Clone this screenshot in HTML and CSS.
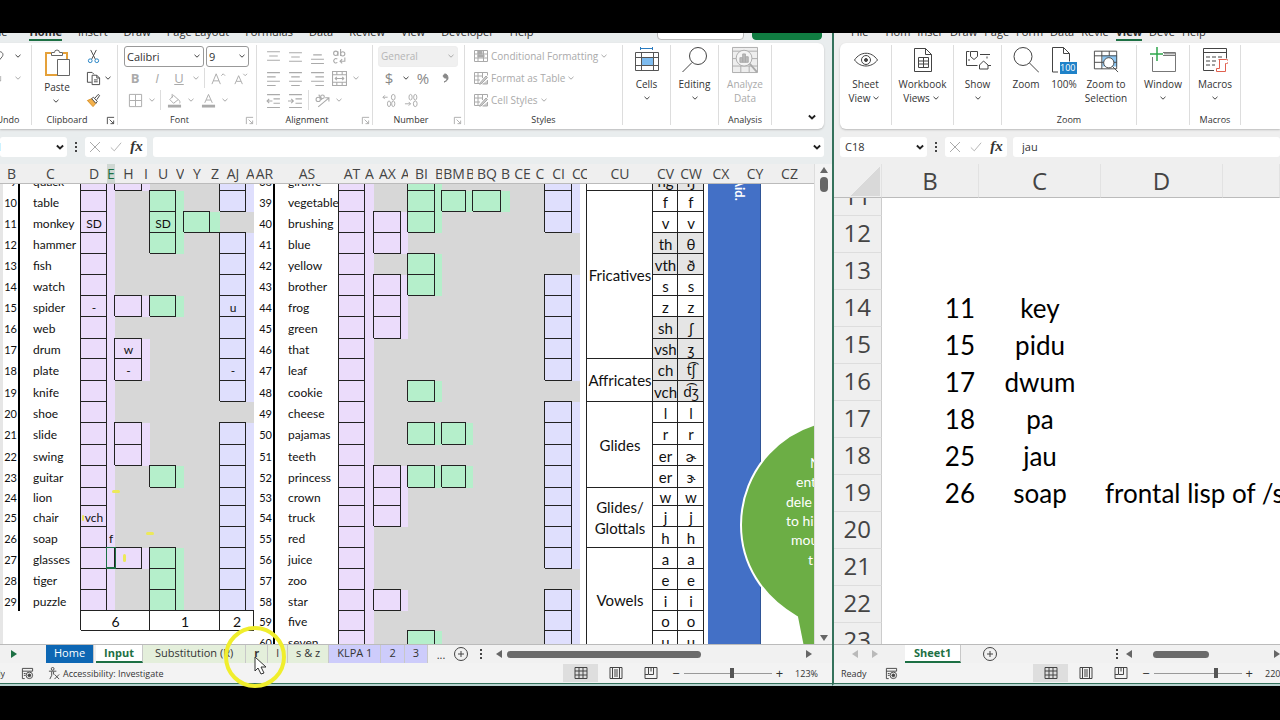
FILE: index.html
```
<!DOCTYPE html>
<html lang="en">
<head>
  <meta charset="UTF-8" />
  <meta name="viewport" content="width=device-width, initial-scale=1.0"/>
  <title>Input - Excel</title>
  <link rel="stylesheet" href="styles.css">
</head>
<body>
  <svg class="defs" aria-hidden="true">
    <symbol id="chev" viewBox="0 0 8 8"><path d="M1.5 2.8 4 5.2 6.5 2.8"/></symbol>
    <symbol id="launch" viewBox="0 0 10 10"><path d="M1.500 9V1.500H9M4 4l4.500 4.500M8.500 5v3.500H5"/></symbol>
    <symbol id="undo" viewBox="0 0 18 18"><path d="M2 5c4-4 11-1 8 4l-5 6"/></symbol>
    <symbol id="redo" viewBox="0 0 18 18"><path d="M1 4l7 8M8 6v6H2M1 16l2-3"/></symbol>
    <symbol id="paste" viewBox="0 0 26 28"><path stroke="#e5a13a" stroke-width="2" d="M7 4H2v22h12M19 4h4v6"/><path fill="#fff" stroke="#666" d="M7.500 6.500v-3h3a2.500 2.500 0 0 1 5 0h3v3zM13.500 10.500h12v16h-12z"/></symbol>
    <symbol id="cut" viewBox="0 0 14 16"><path stroke="#444" d="M4 1l5 10M10 1L5 11"/><g stroke="#1e7fc2"><circle cx="3.500" cy="12.500" r="2"/><circle cx="10.500" cy="12.500" r="2"/></g></symbol>
    <symbol id="copy" viewBox="0 0 16 16"><path stroke="#444" d="M6 12H1.500V1.500h5l2 2"/><path stroke="#444" fill="#fff" d="M6.500 4.500h5l3 3v7h-8zM11.500 4.500v3h3M8.500 9.500h4M8.500 11.500h4"/></symbol>
    <symbol id="brush" viewBox="0 0 16 16"><path fill="#f2b04c" stroke="#d98c1a" d="M1.500 8l5-2 4 5-3 3.500z"/><path fill="#fff" stroke="#444" d="M6 6l2-1.500L12 9l-1.500 2zM9.500 5.500L13 1.500l1.500 1.200-3 4.500"/></symbol>
    <symbol id="borders" viewBox="0 0 16 16"><path d="M1.500 1.500h13v13h-13zM8 2v12M2 8h12"/></symbol>
    <symbol id="fill" viewBox="0 0 16 16"><path d="M7 2.500l5 4.500-5 4-4-4zM5.500 1v4M12 7c2 1 2 3 1.500 4"/><path stroke-width="3" d="M1 14h14"/></symbol>
    <symbol id="fontcol" viewBox="0 0 16 16"><path d="M4 10.500L8 1.500l4 9M5.500 7.500h5"/><path stroke-width="3" d="M1 14h14"/></symbol>
    <symbol id="grow" viewBox="0 0 16 16"><path d="M1 14L5.500 3 10 14M2.500 10.500h6M11 5l2-2 2 2"/></symbol>
    <symbol id="shrink" viewBox="0 0 16 16"><path d="M2 14L6 5l4 9M3.500 11h5M11 3l2 2 2-2"/></symbol>
    <symbol id="al-top" viewBox="0 0 14 14"><path d="M1 2.500h12M3 6.500h8M1 10.500h12"/></symbol>
    <symbol id="al-mid" viewBox="0 0 14 14"><path d="M1 3.500h12M3 7.500h8M1 11.500h12"/></symbol>
    <symbol id="al-bot" viewBox="0 0 14 14"><path d="M3 5.500h8M1 9.500h12M1 13.500h12"/></symbol>
    <symbol id="al-left" viewBox="0 0 14 14"><path d="M1 1.500h12M1 5.500h8M1 9.500h12M1 13.500h8"/></symbol>
    <symbol id="al-cen" viewBox="0 0 14 14"><path d="M1 1.500h12M3 5.500h8M1 9.500h12M3 13.500h8"/></symbol>
    <symbol id="al-right" viewBox="0 0 14 14"><path d="M1 1.500h12M5 5.500h8M1 9.500h12M5 13.500h8"/></symbol>
    <symbol id="wrap" viewBox="0 0 14 14"><circle cx="3.500" cy="4" r="2"/><path d="M5.500 2v4.500M8 0v6.500"/><circle cx="10" cy="4.500" r="2"/><path d="M5 9.500a2 2 0 1 0 0 3M12 8v3.500H7.500M9.500 9.500l-2 2 2 2"/></symbol>
    <symbol id="merge" viewBox="0 0 14 14"><path d="M.5.5h13v13H.5zM.5 3.500h13M.5 10.500h13M4.500.5v3M9.500.5v3M4.500 10.500v3M9.500 10.500v3M3 7h8M4.500 5.500L3 7l1.500 1.500M9.500 5.500L11 7 9.500 8.500"/></symbol>
    <symbol id="outdent" viewBox="0 0 14 14"><path d="M1 1.500h12M7 5.500h6M7 9.500h6M1 13.500h12M1 7.500h5M3 5.500l-2 2 2 2"/></symbol>
    <symbol id="indent" viewBox="0 0 14 14"><path d="M1 1.500h12M7 5.500h6M7 9.500h6M1 13.500h12M0 7.500h5M3 5.500l2 2-2 2"/></symbol>
    <symbol id="orient" viewBox="0 0 14 14"><circle cx="3" cy="6" r="2"/><path d="M3.500 1.500l3 5"/><circle cx="7" cy="3.500" r="1.700"/><path d="M3 13l9.500-8M9.500 4.500h3.500v3.500"/></symbol>
    <symbol id="dec-up" viewBox="0 0 16 14"><path d="M6 3.500H1M3 1.500l-2 2 2 2"/><ellipse cx="12" cy="3.500" rx="2" ry="3"/><ellipse cx="7.500" cy="10.500" rx="1.700" ry="3"/><ellipse cx="12" cy="10.500" rx="1.700" ry="3"/></symbol>
    <symbol id="dec-down" viewBox="0 0 16 14"><path d="M1 10.500h6M5 8.500l2 2-2 2"/><ellipse cx="12" cy="10.500" rx="2" ry="3"/><ellipse cx="7" cy="3.500" rx="1.700" ry="3"/><ellipse cx="12" cy="3.500" rx="1.700" ry="3"/></symbol>
    <symbol id="condf" viewBox="0 0 14 14"><path d="M.5 1.500h13v11H.5zM4 1v12M9.500 1v12M0 5h14M0 9h14"/><path fill="#aaa" d="M4 2h4v3H4zM4 6h6v2H4z"/></symbol>
    <symbol id="fmtt" viewBox="0 0 14 14"><path d="M5 12.500H.5v-11h13v3M4 1v11M8.500 1v6M0 5h9M0 9h6"/><path fill="#ccc" d="M5 13l7-8 1.500 1.500L7 13zM13.500 9v4h-5"/></symbol>
    <symbol id="cells" viewBox="0 0 26 26"><path stroke="#2b7cc0" d="M6.500 0v3M18.500 0v3M7 1.500h11"/><path fill="#7ebcf0" stroke="none" d="M7 11h12v7H7z"/><path stroke="#555" d="M1.500 5.500h23v18h-23zM1.500 10.500h23M1.500 18.500h23M7.500 5.500v18M19.500 5.500v18"/></symbol>
    <symbol id="search" viewBox="0 0 26 26"><circle cx="16" cy="9" r="8.500"/><path d="M10 15.500L.5 25"/></symbol>
    <symbol id="zoomi" viewBox="0 0 26 26"><circle cx="10" cy="9.500" r="9"/><path d="M16.500 16L26 25.500"/></symbol>
    <symbol id="analyze" viewBox="0 0 28 28"><path fill="#eee" d="M.5.5h27v27H.5zM.5 4.500h27M.5 12.500h27M.5 20.500h27M9.500 20v7M18.500 20v7"/><circle cx="13" cy="12" r="8.500" fill="#f4f4f4"/><path d="M19 18l8 9" stroke-width="2"/><path fill="#bbb" d="M8.500 11.500h3v5h-3zM11.500 7.500h3v9h-3zM14.500 10.500h3v6h-3z"/></symbol>
    <symbol id="eye" viewBox="0 0 26 26"><path d="M1.500 13c6-9 17-9 23 0-6 8-17 8-23 0z"/><circle cx="13" cy="13" r="4.500"/><circle cx="13" cy="13" r="1.500" fill="#444"/></symbol>
    <symbol id="book" viewBox="0 0 26 26"><path d="M4.500 1.500h11l6 6v17h-17zM15.500 1.500v6h6M8.500 10.500h10v10h-10zM8.500 14h10M8.500 17h10M13.500 10.500v10"/></symbol>
    <symbol id="show" viewBox="0 0 26 26"><path d="M4.500 4.500H1.500v14h11M5.500 4.500h7v5l-3.500 3-3.500-3zM15 7.500h10M22 11.500v-2M4 14v-2M18.500 14l4.500 4v4h-8.500v-4zM23 18.500h3"/></symbol>
    <symbol id="z100" viewBox="0 0 26 28"><path d="M7 26H1.500V1.500h11l6 6v8M12.500 1.500v6h6"/><path fill="#1f82c8" stroke="none" d="M9 16h17v12H9z"/></symbol>
    <symbol id="zsel" viewBox="0 0 28 28"><path fill="#8cc6f2" stroke="none" d="M10 9h16v12H10z"/><path d="M1.500 4.500h24v19h-24zM1.500 9.500h24M1.500 16.500h24M9.500 4.500v19M17.500 4.500v5"/><circle cx="17" cy="17" r="5.500" fill="#fff"/><path d="M21 21l6 6"/></symbol>
    <symbol id="window" viewBox="0 0 26 26"><path stroke="#777" d="M2.500 10v14.500h23v-19H13M13 8.500h12M14 6.800h11"/><path stroke="#2fa74c" stroke-width="1.500" d="M7 0v14M0 7h13"/></symbol>
    <symbol id="macros" viewBox="0 0 26 28"><path d="M12 24.500H1.500v-22h23v10M1.500 6.500h23M4 11h4M10 11h4M16 11h4M4 15h4M10 15h4M4 19h4M10 19h3"/><path stroke="#e0604f" fill="#fff" d="M16.500 13.500h8a2 2 0 0 1 0 4h-1v8h-9v-3h3v-9"/></symbol>
    <symbol id="norm" viewBox="0 0 14 14"><path d="M1 1.500h12v11H1zM1 5h12M1 9h12M5 1v12M9 1v12"/></symbol>
    <symbol id="layout" viewBox="0 0 14 14"><path d="M1 1.500h12v11H1zM3.500 1.500v11M10.500 1.500v11M5 4h4M5 6h4M5 8h4M5 10h4"/></symbol>
    <symbol id="breaks" viewBox="0 0 14 14"><path d="M1 1.500h12v11H1zM4.500 1.500v7h5v-7M7 1.500v4M1 8.500h3"/></symbol>
    <symbol id="rec" viewBox="0 0 14 14"><path d="M4 12.500H1.500v-11h11v3M1.500 4.500h11M3 7h2M3 9h2"/><circle cx="9" cy="9" r="3.500"/><circle cx="9" cy="9" r="1.500" fill="#444"/></symbol>
    <symbol id="access" viewBox="0 0 14 14"><circle cx="5" cy="2" r="1.500"/><path d="M1 4.500h8M4 5v4l-2 4M6 5v3M7 8l5 5M12 8l-5 5"/></symbol>
    <symbol id="plus" viewBox="0 0 14 14"><circle cx="7" cy="7" r="6.500"/><path d="M7 4v6M4 7h6"/></symbol>
    <symbol id="cross" viewBox="0 0 12 12"><path d="M1 1l10 10M11 1L1 11"/></symbol>
    <symbol id="tick" viewBox="0 0 14 12"><path d="M1 6.500l4 4L13 1"/></symbol>
  </svg>

  <div class="desktop">
    <section class="window window-main">
      <nav class="tabs">
        <a href="#" class="cut-left">File</a>
        <a href="#" class="active">Home</a>
        <a href="#">Insert</a>
        <a href="#">Draw</a>
        <a href="#">Page Layout</a>
        <a href="#">Formulas</a>
        <a href="#">Data</a>
        <a href="#">Review</a>
        <a href="#">View</a>
        <a href="#">Developer</a>
        <a href="#">Help</a>
        <span class="spacer"></span>
        <button class="comments">Comments</button>
        <button class="share">Share</button>
      </nav>

      <div class="ribbon">
        <div class="group g-undo">
          <div class="row"><button class="ic ic-s" aria-label="Undo"><svg><use href="#undo"/></svg></button><svg class="chev"><use href="#chev"/></svg></div>
          <div class="row dim"><button class="ic ic-s" aria-label="Redo"><svg><use href="#redo"/></svg></button><svg class="chev"><use href="#chev"/></svg></div>
          <div class="label">Undo</div>
        </div>
        <div class="group g-clip">
          <div class="clip">
            <button class="big"><svg class="paste"><use href="#paste"/></svg>Paste<svg class="chev"><use href="#chev"/></svg></button>
            <div class="stack">
              <div class="row"><button class="ic" aria-label="Cut"><svg><use href="#cut"/></svg></button></div>
              <div class="row"><button class="ic" aria-label="Copy"><svg><use href="#copy"/></svg></button><svg class="chev"><use href="#chev"/></svg></div>
              <div class="row"><button class="ic" aria-label="Format Painter"><svg><use href="#brush"/></svg></button></div>
            </div>
          </div>
          <div class="label">Clipboard<svg class="launch"><use href="#launch"/></svg></div>
        </div>
        <div class="group g-font">
          <div class="row">
            <span class="combo combo-name"><select aria-label="Font"><option>Calibri</option></select><svg class="chev"><use href="#chev"/></svg></span>
            <span class="combo combo-size"><select aria-label="Font size"><option>9</option></select><svg class="chev"><use href="#chev"/></svg></span>
          </div>
          <div class="row dim">
            <button class="ic"><b>B</b></button><button class="ic"><i>I</i></button><button class="ic"><u>U</u></button><svg class="chev"><use href="#chev"/></svg><span class="sep"></span>
            <button class="ic" aria-label="Grow font"><svg><use href="#grow"/></svg></button><button class="ic" aria-label="Shrink font"><svg><use href="#shrink"/></svg></button>
          </div>
          <div class="row dim">
            <button class="ic" aria-label="Borders"><svg><use href="#borders"/></svg></button><svg class="chev"><use href="#chev"/></svg><span class="sep"></span>
            <button class="ic" aria-label="Fill colour"><svg><use href="#fill"/></svg></button><svg class="chev"><use href="#chev"/></svg>
            <button class="ic" aria-label="Font colour"><svg><use href="#fontcol"/></svg></button><svg class="chev"><use href="#chev"/></svg>
          </div>
          <div class="label">Font<svg class="launch dim"><use href="#launch"/></svg></div>
        </div>
        <div class="group g-align">
          <div class="row dim">
            <button class="ic" aria-label="Top align"><svg><use href="#al-top"/></svg></button><button class="ic" aria-label="Middle align"><svg><use href="#al-mid"/></svg></button><button class="ic" aria-label="Bottom align"><svg><use href="#al-bot"/></svg></button><button class="ic" aria-label="Wrap text"><svg><use href="#wrap"/></svg></button>
          </div>
          <div class="row dim">
            <button class="ic" aria-label="Align left"><svg><use href="#al-left"/></svg></button><button class="ic" aria-label="Center"><svg><use href="#al-cen"/></svg></button><button class="ic" aria-label="Align right"><svg><use href="#al-right"/></svg></button><button class="ic" aria-label="Merge"><svg><use href="#merge"/></svg></button><svg class="chev"><use href="#chev"/></svg>
          </div>
          <div class="row dim">
            <button class="ic" aria-label="Decrease indent"><svg><use href="#outdent"/></svg></button><button class="ic" aria-label="Increase indent"><svg><use href="#indent"/></svg></button><span class="sep"></span><button class="ic" aria-label="Orientation"><svg><use href="#orient"/></svg></button><svg class="chev"><use href="#chev"/></svg>
          </div>
          <div class="label">Alignment<svg class="launch dim"><use href="#launch"/></svg></div>
        </div>
        <div class="group g-num">
          <div class="row"><span class="combo combo-off"><select aria-label="Number format" disabled><option>General</option></select><svg class="chev"><use href="#chev"/></svg></span></div>
          <div class="row"><button class="ic money">$</button><svg class="chev"><use href="#chev"/></svg><button class="ic money">%</button><button class="ic" aria-label="Comma style"><svg class="comma" viewBox="0 0 10 14"><path d="M7 4a2 2 0 1 0-2 3h2c0 2-1 3-3 4 4-1 5-4 3-7z"/></svg></button></div>
          <div class="row dim"><button class="ic" aria-label="Increase decimal"><svg><use href="#dec-up"/></svg></button><button class="ic" aria-label="Decrease decimal"><svg><use href="#dec-down"/></svg></button></div>
          <div class="label">Number<svg class="launch dim"><use href="#launch"/></svg></div>
        </div>
        <div class="group g-styles">
          <div class="row dim"><button class="text"><svg><use href="#condf"/></svg>Conditional Formatting<svg class="chev"><use href="#chev"/></svg></button></div>
          <div class="row dim"><button class="text"><svg><use href="#fmtt"/></svg>Format as Table<svg class="chev"><use href="#chev"/></svg></button></div>
          <div class="row dim"><button class="text"><svg><use href="#fmtt"/></svg>Cell Styles<svg class="chev"><use href="#chev"/></svg></button></div>
          <div class="label">Styles</div>
        </div>
        <div class="group g-one"><button class="big"><svg class="pic"><use href="#cells"/></svg>Cells<svg class="chev"><use href="#chev"/></svg></button></div>
        <div class="group g-one"><button class="big"><svg class="pic"><use href="#search"/></svg>Editing<svg class="chev"><use href="#chev"/></svg></button></div>
        <div class="group g-analysis">
          <button class="big dim"><svg class="pic"><use href="#analyze"/></svg>Analyze<br>Data</button>
          <div class="label">Analysis</div>
        </div>
        <button class="collapse" aria-label="Collapse ribbon"><svg class="chev"><use href="#chev"/></svg></button>
      </div>

      <div class="formula-bar">
        <div class="name-box name-cut"><input aria-label="Name box" value="1"><svg class="chev"><use href="#chev"/></svg></div>
        <span class="grip"></span>
        <div class="fx"><svg class="x"><use href="#cross"/></svg><svg class="x"><use href="#tick"/></svg><em>fx</em></div>
        <div class="formula"><input aria-label="Formula" value=""><svg class="chev"><use href="#chev"/></svg></div>
      </div>

      <div class="sheet-area">
        <div class="sheet">
          <div class="scroller" id="scroller">
            <table class="grid" id="grid"></table>
          </div>
          <div class="shape-bar"><span>Aid.</span></div>
          <svg class="callout" viewBox="0 0 76 224">
            <path fill="#6cae45" stroke="#fff" stroke-width="2" d="M100 0C44 4 2 50 2 105c0 39 21 72 56 92l6 30h40z"/>
            <g fill="#fff" font-size="14"><text x="71" y="48">N</text><text x="57" y="67">ent</text><text x="47" y="87">dele</text><text x="47" y="106">to hi</text><text x="52" y="125">mou</text><text x="69" y="145">t</text></g>
          </svg>
          <span class="cell-cursor"></span>
          <span class="spark spark-1"></span><span class="spark spark-2"></span><span class="spark spark-3"></span><span class="spark spark-4"></span>
        </div>
        <div class="vscroll"><span class="tri up"></span><span class="vthumb"></span><span class="tri down"></span></div>
      </div>

      <div class="sheet-tabs">
        <span class="tab-nav"><span class="tri next"></span></span>
        <button class="stab home">Home</button>
        <button class="stab current">Input</button>
        <button class="stab green wide">Substitution (R)</button>
        <button class="stab green"><b>r</b></button>
        <button class="stab green">l</button>
        <button class="stab green">s &amp; z</button>
        <button class="stab lilac">KLPA 1</button>
        <button class="stab lilac">2</button>
        <button class="stab lilac">3</button>
        <span class="more">...</span>
        <button class="add" aria-label="New sheet"><svg><use href="#plus"/></svg></button>
        <span class="grip"></span>
        <div class="hscroll"><span class="tri left"></span><span class="track"><span class="hthumb"></span></span><span class="tri right"></span></div>
      </div>

      <footer class="status">
        <span class="ready-cut">Ready</span>
        <svg class="sic"><use href="#rec"/></svg>
        <svg class="sic"><use href="#access"/></svg>
        <span>Accessibility: Investigate</span>
        <span class="spacer"></span>
        <button class="view on" aria-label="Normal"><svg><use href="#norm"/></svg></button>
        <button class="view" aria-label="Page Layout"><svg><use href="#layout"/></svg></button>
        <button class="view" aria-label="Page Break"><svg><use href="#breaks"/></svg></button>
        <span class="zoom"><button>−</button><input type="range" aria-label="Zoom" min="0" max="100" value="55"><button>+</button></span>
        <span class="pct">123%</span>
      </footer>
    </section>

    <section class="window window-side">
      <nav class="tabs">
        <a href="#">File</a>
        <a href="#">Hom</a>
        <a href="#">Inser</a>
        <a href="#">Draw</a>
        <a href="#">Page</a>
        <a href="#">Form</a>
        <a href="#">Data</a>
        <a href="#">Revie</a>
        <a href="#" class="active">View</a>
        <a href="#">Deve</a>
        <a href="#">Help</a>
      </nav>

      <div class="ribbon">
        <div class="group s-sheet"><button class="big"><svg class="pic"><use href="#eye"/></svg>Sheet<span>View<svg class="chev"><use href="#chev"/></svg></span></button></div>
        <div class="group s-book"><button class="big"><svg class="pic"><use href="#book"/></svg>Workbook<span>Views<svg class="chev"><use href="#chev"/></svg></span></button></div>
        <div class="group s-show"><button class="big"><svg class="pic"><use href="#show"/></svg>Show<svg class="chev"><use href="#chev"/></svg></button></div>
        <div class="group s-zoom">
          <div class="zooms">
            <button class="big"><svg class="pic"><use href="#zoomi"/></svg>Zoom</button>
            <button class="big z100"><svg class="pic"><use href="#z100"/></svg><span class="hundred">100</span>100%</button>
            <button class="big"><svg class="pic"><use href="#zsel"/></svg>Zoom to<br>Selection</button>
          </div>
          <div class="label">Zoom</div>
        </div>
        <div class="group s-win"><button class="big"><svg class="pic"><use href="#window"/></svg>Window<svg class="chev"><use href="#chev"/></svg></button></div>
        <div class="group s-mac">
          <button class="big"><svg class="pic"><use href="#macros"/></svg>Macros<svg class="chev"><use href="#chev"/></svg></button>
          <div class="label">Macros</div>
        </div>
      </div>

      <div class="formula-bar">
        <div class="name-box"><input aria-label="Name box" value="C18"><svg class="chev"><use href="#chev"/></svg></div>
        <span class="grip"></span>
        <div class="fx"><svg class="x"><use href="#cross"/></svg><svg class="x"><use href="#tick"/></svg><em>fx</em></div>
        <div class="formula"><input aria-label="Formula" value="jau"></div>
      </div>

      <div class="sheet-area">
        <div class="sheet">
          <div class="scroller" id="sideScroller">
            <table class="notes">
              <colgroup><col class="n-row"><col class="n-b"><col class="n-c"><col class="n-c"><col></colgroup>
              <thead><tr><th class="corner"></th><th>B</th><th>C</th><th>D</th><th></th></tr></thead>
              <tbody>
                <tr><th>11</th><td></td><td></td><td></td><td></td></tr>
                <tr><th>12</th><td></td><td></td><td></td><td></td></tr>
                <tr><th>13</th><td></td><td></td><td></td><td></td></tr>
                <tr><th>14</th><td>11</td><td>key</td><td></td><td></td></tr>
                <tr><th>15</th><td>15</td><td>pidu</td><td></td><td></td></tr>
                <tr><th>16</th><td>17</td><td>dwum</td><td></td><td></td></tr>
                <tr><th>17</th><td>18</td><td>pa</td><td></td><td></td></tr>
                <tr><th>18</th><td>25</td><td>jau</td><td></td><td></td></tr>
                <tr><th>19</th><td>26</td><td>soap</td><td colspan="2">frontal lisp of /s</td></tr>
                <tr><th>20</th><td></td><td></td><td></td><td></td></tr>
                <tr><th>21</th><td></td><td></td><td></td><td></td></tr>
                <tr><th>22</th><td></td><td></td><td></td><td></td></tr>
                <tr><th>23</th><td></td><td></td><td></td><td></td></tr>
              </tbody>
            </table>
          </div>
        </div>
      </div>

      <div class="sheet-tabs">
        <span class="tab-nav"><span class="tri prev"></span><span class="tri next"></span></span>
        <button class="stab current">Sheet1</button>
        <button class="add" aria-label="New sheet"><svg><use href="#plus"/></svg></button>
        <span class="spacer"></span>
        <span class="grip"></span>
        <div class="hscroll"><span class="tri left"></span><span class="track"><span class="hthumb"></span></span><span class="tri right"></span></div>
      </div>

      <footer class="status">
        <span>Ready</span>
        <svg class="sic"><use href="#rec"/></svg>
        <span class="spacer"></span>
        <button class="view on" aria-label="Normal"><svg><use href="#norm"/></svg></button>
        <button class="view" aria-label="Page Layout"><svg><use href="#layout"/></svg></button>
        <button class="view" aria-label="Page Break"><svg><use href="#breaks"/></svg></button>
        <span class="zoom"><button>−</button><input type="range" aria-label="Zoom" min="0" max="100" value="72"><button>+</button></span>
        <span class="pct">220</span>
      </footer>
    </section>

    <svg class="pointer" viewBox="0 0 64 64">
      <circle cx="32" cy="32" r="29" fill="none" stroke="#f0ee2c" stroke-width="4"/>
      <path fill="#fff" stroke="#333" d="M32 32v14l3-3 3 6 3-1-3-6h5z"/>
    </svg>
  </div>

  <script src="app.js"></script>
</body>
</html>
```
FILE: styles.css
```
* {
  box-sizing: border-box;
}

body {
  margin: 0;
  background: #000;
  font-family: "Open Sans", "Noto Sans", sans-serif;
  font-size: 11px;
  color: #333;
}

button,
input,
select {
  font: inherit;
  color: inherit;
  border: none;
  background: none;
  padding: 0;
  margin: 0;
}

button {
  white-space: nowrap;
}

svg {
  fill: none;
  stroke: #444;
  flex: none;
}

.defs {
  display: none;
}

.desktop {
  position: relative;
  display: flex;
  height: 100vh;
  padding: 33px 0 34px;
  overflow: hidden;
}

.window {
  display: flex;
  flex-direction: column;
  background: #e9edee;
  min-width: 0;
  border-bottom: 2px solid #b9d3d0;
}

.window-main {
  flex: 0 0 65%;
}

.window-side {
  flex: 1;
  border-left: 2px solid #35725c;
  background: #efefef;
}

.spacer {
  flex: 1;
}

/* ribbon tabs */
.tabs {
  display: flex;
  flex: none;
  height: 10px;
  overflow: hidden;
  align-items: flex-end;
  gap: 16px;
}

.tabs a {
  color: #333;
  text-decoration: none;
  height: 20px;
  line-height: 18px;
  font-size: 11px;
}

.tabs a.active {
  font-weight: bold;
  border-bottom: 2px solid #1d7044;
  margin-bottom: 2px;
  height: 18px;
}

.tabs .cut-left {
  margin-left: -10px;
  margin-right: 6px;
}

.comments,
.share {
  height: 24px;
  width: 87px;
  margin-bottom: 3px;
  border: 1px solid #bbb;
  border-radius: 4px;
  background: #fff;
}

.share {
  width: 70px;
  margin: 0 10px 3px -8px;
  background: #107c41;
  border-color: #107c41;
  color: #fff;
}

.window-side .tabs {
  padding-left: 17px;
  gap: 7px;
}

.window-side .tabs a:first-child {
  margin-right: 10px;
}

/* ribbon */
.ribbon {
  display: flex;
  flex: none;
  height: 86px;
  margin-right: 8px;
  padding: 2px 0 4px;
  background: #fff;
  border-radius: 0 6px 6px 0;
  box-shadow: 0 1px 2px #bbb;
}

.group {
  position: relative;
  flex: none;
  border-right: 1px solid #ddd;
  height: 80px;
}

.row {
  display: flex;
  align-items: center;
  height: 22px;
}

.dim {
  color: #aaa;
}

.dim svg,
svg.dim {
  stroke: #aaa;
}

.ic {
  width: 22px;
  height: 20px;
  display: flex;
  align-items: center;
  justify-content: center;
  font-size: 13px;
}

.ic svg {
  width: 15px;
  height: 15px;
}

.chev {
  width: 8px;
  height: 8px;
  margin: 0 2px;
}

.sep {
  width: 1px;
  height: 20px;
  margin: 0 2px;
  background: #ddd;
}

.label {
  position: absolute;
  left: 0;
  right: 0;
  bottom: -2px;
  text-align: center;
  font-size: 9px;
  line-height: 14px;
}

.label:has(.launch) {
  padding-right: 15px;
}

.launch {
  position: absolute;
  right: 2px;
  bottom: 2px;
  width: 9px;
  height: 9px;
}

.big {
  display: flex;
  flex-direction: column;
  align-items: center;
  width: 100%;
  font-size: 10px;
  line-height: 14px;
}

.big .pic {
  width: 26px;
  height: 28px;
  margin: 1px 0 3px;
}

.big > .chev {
  margin-top: 3px;
}

.g-undo {
  width: 32px;
  overflow: hidden;
}

.g-undo .row {
  margin-left: -10px;
}

.g-undo .label {
  left: -15px;
}

.g-clip {
  width: 86px;
}

.clip {
  display: flex;
}

.clip .big {
  width: 50px;
}

.paste {
  width: 26px;
  height: 28px;
  margin: 4px 0 3px;
}

.clip .chev {
  margin-left: 0;
}

.g-font {
  width: 139px;
  padding-left: 6px;
}

.combo {
  position: relative;
  display: flex;
  align-items: center;
  height: 21px;
  border: 1px solid #999;
  border-radius: 3px;
  background: #fff;
}

.combo select {
  appearance: none;
  width: 100%;
  padding-left: 2px;
}

.combo .chev {
  position: absolute;
  right: 0;
  pointer-events: none;
}

.combo-name {
  width: 80px;
  margin-right: 2px;
}

.combo-size {
  width: 43px;
}

.combo-off {
  width: 80px;
  font-size: 10px;
  color: #b5b5b5;
  background: #f0f0f0;
  border-color: #eee;
}

.combo-off select {
  opacity: 1;
}

.combo-off .chev {
  stroke: #aaa;
}

.g-align {
  width: 116px;
  padding-left: 5px;
}

.g-num {
  width: 92px;
  padding-left: 5px;
}

.money {
  font-size: 15px;
  color: #888;
}

.ic .comma {
  width: 10px;
  height: 14px;
  fill: #888;
  stroke: #888;
}

.g-styles {
  width: 158px;
  padding-left: 9px;
}

.text {
  display: flex;
  align-items: center;
  font-size: 10px;
}

.text svg:first-child {
  width: 14px;
  height: 14px;
  margin-right: 3px;
}

.g-one {
  width: 48px;
}

.g-analysis {
  width: 53px;
}

.collapse {
  margin: auto 5px 3px auto;
  height: 12px;
}

.collapse .chev,
.name-box .chev,
.formula .chev {
  width: 10px;
  height: 10px;
  stroke: #222;
  stroke-width: 1.500;
}

.window-side .ribbon {
  margin: 0 0 0 6px;
  border-radius: 6px 0 0 6px;
}

.s-sheet {
  width: 52px;
}

.s-book {
  width: 62px;
}

.s-show {
  width: 48px;
}

.s-zoom {
  width: 135px;
}

.zooms {
  display: grid;
  grid-template-columns: 48px 28px 56px;
}

.z100 {
  position: relative;
}

.hundred {
  position: absolute;
  left: 10px;
  top: 17px;
  font-size: 9px;
  line-height: 12px;
  color: #fff;
}

.s-win {
  width: 53px;
}

.s-mac {
  width: 51px;
}

.s-sheet .big span,
.s-book .big span {
  display: flex;
  align-items: center;
}

/* formula bar */
.formula-bar {
  display: flex;
  flex: none;
  align-items: center;
  height: 35px;
  padding-right: 8px;
}

.name-box,
.fx,
.formula {
  display: flex;
  align-items: center;
  height: 20px;
  background: #fff;
  border-radius: 3px;
}

.name-box {
  width: 87px;
}

.name-box input {
  width: 100%;
  min-width: 0;
  padding-left: 5px;
}

.name-cut input {
  padding-left: 0;
  text-indent: -4px;
}

.name-cut {
  width: 67px;
}

.grip {
  flex: none;
  width: 2px;
  height: 10px;
  margin: 0 8px;
  background: repeating-linear-gradient(#444 0 2px, transparent 2px 4px);
}

.fx {
  width: 62px;
  justify-content: space-around;
  margin-right: 6px;
}

.fx em {
  font: italic bold 15px "Liberation Serif", serif;
}

.x {
  width: 12px;
  height: 12px;
  stroke: #aaa;
}

.formula {
  flex: 1;
}

.formula input {
  flex: 1;
  min-width: 0;
  padding-left: 9px;
}

.formula .chev {
  margin-right: 2px;
}

.window-side .formula-bar {
  padding: 0 0 0 6px;
}

/* sheets */
.sheet-area {
  display: flex;
  flex: 1;
  min-height: 0;
}

.sheet {
  position: relative;
  flex: 1;
  min-width: 0;
  overflow: hidden;
  background: #fff;
}

.scroller {
  height: 100%;
  overflow: hidden;
}

.grid,
.notes {
  table-layout: fixed;
  border-spacing: 0;
  width: 100%;
}

.grid td,
.grid th {
  padding: 0;
  overflow: visible;
  white-space: nowrap;
}

.grid thead th {
  position: sticky;
  top: 0;
  z-index: 2;
  height: 20px;
  background: #efefef;
  border-bottom: 1px solid #bbb;
  font: 14px/18px "Open Sans", sans-serif;
  color: #444;
  overflow: hidden;
}

.grid thead th.picked {
  background: #cfd8d3;
  color: #1d7044;
}

.grid td {
  font: 12px/16px Lato, "Noto Sans", sans-serif;
  color: #111;
  text-align: center;
  padding-top: 2px;
}

.grid .edge {
  background: #e6e6e6;
}

.grid .num {
  text-align: right;
  font-size: 11px;
  border-right: 2px solid #000;
  padding-right: 1px;
}

.grid .word {
  text-align: left;
  padding-left: 13px;
}

.gray {
  background: #d7d7d7;
}

.purple {
  background: #ebdcfb;
}

.mint {
  background: #b5efcb;
}

.blue {
  background: #dfdffd;
}

.box {
  box-shadow: -1px -1px 0 #222, 0 -1px 0 #222, inset -1px -1px 0 #222;
}

.line-bottom {
  box-shadow: inset 0 -1px 0 #222;
}

.grid .sound {
  font-size: 15px;
  padding-top: 0;
}

.grid .sound.tied {
  font-family: "Noto Sans", sans-serif;
  font-size: 14px;
}

.grid .total {
  font-size: 14px;
}

.grid .kind {
  font-size: 15px;
  line-height: 21px;
  padding-top: 0;
}

.shade {
  background: #e5e5e5;
}

/* drawn shapes on top of the cells */
.shape-bar {
  position: absolute;
  left: 708px;
  top: 20px;
  bottom: 0;
  width: 53px;
  background: #4370c6;
  border-right: 1px solid #2f5597;
}

.shape-bar span {
  position: absolute;
  left: 24px;
  top: -6px;
  writing-mode: vertical-rl;
  font: bold 13px/16px Lato, sans-serif;
  color: #fff;
  clip-path: inset(6px 0 0 0);
}

.callout {
  position: absolute;
  left: 739px;
  bottom: 0;
  width: 76px;
  height: 224px;
}

.callout text {
  stroke: none;
  font-family: Lato, sans-serif;
}

.cell-cursor {
  position: absolute;
  left: 106px;
  top: 383px;
  width: 10px;
  height: 22px;
  border: 1px solid #1d7044;
  border-bottom-width: 2px;
}

.spark {
  position: absolute;
  width: 8px;
  height: 3px;
  border-radius: 2px;
  background: #ece95a;
}

.spark-1 {
  left: 112px;
  top: 326px;
}

.spark-2 {
  left: 146px;
  top: 368px;
}

.spark-3 {
  left: 123px;
  top: 390px;
  width: 3px;
  height: 8px;
}

.spark-4 {
  left: 82px;
  top: 351px;
  width: 2px;
  height: 6px;
}

.tri {
  width: 0;
  height: 0;
  flex: none;
  border: 4px solid transparent;
}

.tri.up {
  border-top: none;
  border-bottom: 6px solid #666;
}

.tri.down {
  border-bottom: none;
  border-top: 6px solid #666;
}

.tri.left,
.tri.prev {
  border-left: none;
  border-right: 6px solid #666;
}

.tri.right,
.tri.next {
  border-right: none;
  border-left: 6px solid #666;
}

.vscroll {
  width: 18px;
  padding: 3px 0;
  background: #f3f3f3;
  border-left: 1px solid #ddd;
  display: flex;
  flex-direction: column;
  align-items: center;
}

.vthumb {
  width: 8px;
  height: 15px;
  margin: 4px 0 auto;
  border-radius: 4px;
  background: #666;
}

/* notes sheet */
.n-row {
  width: 48px;
}

.n-b {
  width: 97px;
}

.n-c {
  width: 122px;
}

.notes th,
.notes td {
  padding: 0 4px 2px;
  height: 37px;
  line-height: 34px;
  white-space: nowrap;
}

.notes td {
  font-family: Lato, sans-serif;
  font-size: 26px;
  color: #000;
  text-align: center;
}

.notes td:nth-child(2) {
  text-align: right;
}

.notes td:nth-child(4) {
  text-align: left;
}

.notes th {
  font-size: 24px;
  font-weight: normal;
  color: #444;
  background: #efefef;
  border-right: 1px solid #ccc;
  border-bottom: 1px solid #ddd;
  text-align: right;
  padding-right: 10px;
}

.notes thead th {
  position: sticky;
  top: 0;
  z-index: 1;
  height: 34px;
  line-height: 32px;
  padding: 0;
  text-align: center;
  border-right-color: #e2e2e2;
  border-bottom-color: #bbb;
}

.notes thead .corner {
  background: linear-gradient(135deg, transparent 50%, #d9d9d9 50%) no-repeat 17px 3px / 29px 29px #efefef;
}

/* sheet tabs */
.sheet-tabs {
  display: flex;
  flex: none;
  align-items: center;
  height: 19px;
  background: #f1f1f1;
  border-top: 1px solid #bbb;
  font-size: 11px;
}

.tab-nav {
  display: flex;
  width: 46px;
  padding-left: 11px;
  gap: 14px;
}

.window-main .tab-nav .tri {
  border-left-color: #1d7044;
}

.window-side .tab-nav {
  width: 71px;
  padding-left: 18px;
}

.window-side .tab-nav .tri {
  opacity: 0.400;
}

.stab {
  height: 18px;
  line-height: 14px;
  padding: 0 8px 3px;
  border-right: 1px solid #c8c8c8;
}

.stab.home {
  background: #0d67b4;
  color: #fff;
  margin-right: 2px;
}

.stab.current {
  background: #fff;
  color: #1d7044;
  font-weight: bold;
  border-bottom: 2px solid #1d7044;
  padding-bottom: 1px;
}

.stab.green {
  background: #e4efdb;
}

.stab.wide {
  padding: 0 12px 3px;
}

.stab.lilac {
  background: #cdccfb;
}

.more {
  width: 26px;
  text-align: center;
}

.add {
  width: 14px;
  height: 14px;
}

.add svg {
  display: block;
  width: 14px;
  height: 14px;
}

.window-main .sheet-tabs .grip {
  margin: 0 14px 0 12px;
}

.hscroll {
  display: flex;
  flex: 1;
  align-items: center;
  padding-right: 20px;
  gap: 5px;
}

.track {
  flex: 1;
}

.hthumb {
  display: block;
  width: 66%;
  height: 7px;
  border-radius: 4px;
  background: #6b6b6b;
}

.window-side .stab.current {
  padding: 0 9px 1px;
  margin-right: 22px;
}

.window-side .hscroll {
  flex: 0 0 154px;
  padding-right: 0;
}

.window-side .track {
  padding-left: 16px;
}

.window-side .hthumb {
  width: 56px;
}

/* status bar */
.status {
  display: flex;
  flex: none;
  align-items: center;
  height: 21px;
  padding-right: 14px;
  background: #f3f3f3;
  border-bottom: 1px solid #35725c;
  font-size: 9px;
}

.ready-cut {
  width: 5px;
  direction: rtl;
  overflow: hidden;
  margin-right: 16px;
}

.sic {
  width: 13px;
  height: 13px;
  margin-right: 14px;
}

.sic + .sic {
  margin-right: 2px;
}

.view {
  width: 35px;
  height: 18px;
  display: flex;
  align-items: center;
  justify-content: center;
}

.view svg {
  width: 14px;
  height: 14px;
}

.view.on {
  background: #dedede;
}

.zoom {
  display: flex;
  align-items: center;
  gap: 4px;
  margin: 0 12px 0 4px;
  font-size: 13px;
}

.zoom input {
  appearance: none;
  width: 88px;
  height: 12px;
  background: linear-gradient(#999, #999) center / 100% 1px no-repeat;
}

.zoom input::-webkit-slider-thumb {
  appearance: none;
  width: 4px;
  height: 10px;
  background: #555;
}

.window-side .status {
  padding: 0 0 0 7px;
}

.window-side .sic {
  margin-left: 18px;
}

.window-side .pct {
  width: 15px;
  overflow: hidden;
}

.pointer {
  position: absolute;
  left: 223px;
  top: 625px;
  width: 64px;
  height: 64px;
}
```
FILE: app.js
```
const columns = [
  ['', 3], ['B', 17], ['C', 61], ['D', 26], ['E', 8], ['H', 27], ['I', 8], ['U', 26], ['V', 8],
  ['Y', 26], ['Z', 10], ['AJ', 26], ['A', 8], ['AR', 21], ['AS', 64], ['AT', 26], ['A', 9],
  ['AX', 27], ['A', 7], ['BI', 27], ['B', 7], ['BM', 24], ['B', 7], ['BQ', 28], ['B', 9],
  ['CE', 25], ['C', 10], ['CI', 27], ['C', 8], ['C', 7], ['CU', 66], ['CV', 25], ['CW', 26],
  ['CX', 34], ['CY', 34], ['CZ', 35], ['', 0]
];

const heights = [21, 21, 21, 21, 21, 21, 21, 22, 20, 22, 21, 21, 22, 21, 22, 18, 21, 21, 21, 21, 21, 20, 21];

const leftWords = ['quack', 'table', 'monkey', 'hammer', 'fish', 'watch', 'spider', 'web', 'drum', 'plate', 'knife',
  'shoe', 'slide', 'swing', 'guitar', 'lion', 'chair', 'soap', 'glasses', 'tiger', 'puzzle'];
const rightWords = ['giraffe', 'vegetable', 'brushing', 'blue', 'yellow', 'brother', 'frog', 'green', 'that', 'leaf',
  'cookie', 'cheese', 'pajamas', 'teeth', 'princess', 'crown', 'truck', 'red', 'juice', 'zoo', 'star', 'five', 'seven'];

// rows that have an entry box in each column
const boxes = {
  H: [9, 15, 17, 18, 21, 22, 27],
  U: [10, 11, 12, 15, 23, 27, 28, 29],
  Y: [11],
  AJ: [9, 10, 12, 13, 14, 15, 16, 17, 18, 19, 21, 22, 23, 24, 25, 26, 27, 28, 29],
  AX: [40, 41, 43, 44, 45, 52, 53, 54, 58],
  BI: [38, 39, 40, 42, 43, 48, 50, 52, 60],
  BM: [39, 50, 52],
  BQ: [39],
  CI: [38, 39, 40, 43, 44, 45, 46, 47, 49, 50, 51, 52, 53, 54, 55, 56, 58, 59, 60]
};

const entries = {
  D11: 'SD', D15: '-', D25: 'vch', E26: 'f', H17: 'w', H18: '-', U11: 'SD', AJ15: 'u', AJ18: '-'
};

const sounds = [
  ['ng', 'ŋ', 1], ['f', 'f'], ['v', 'v'], ['th', 'θ', 1], ['vth', 'ð', 1], ['s', 's'], ['z', 'z'],
  ['sh', 'ʃ', 1], ['vsh', 'ʒ', 1], ['ch', 't͡ʃ', 1], ['vch', 'd͡ʒ', 1], ['l', 'l'], ['r', 'r'],
  ['er', 'ɚ'], ['er', 'ɝ'], ['w', 'w'], ['j', 'j'], ['h', 'h'], ['a', 'a'], ['e', 'e'], ['i', 'i'],
  ['o', 'o'], ['u', 'u']
];

const kinds = {
  0: ['', 1], 1: ['Fricatives', 8], 9: ['Affricates', 2], 11: ['Glides', 4],
  15: ['Glides/<br>Glottals', 3], 18: ['Vowels', 5]
};

function cell(cls, text = '', attrs = '') {
  return `<td class="${cls}" ${attrs}>${text}</td>`;
}

// an entry box plus the narrow column next to it
function pair(col, row, color) {
  if (!boxes[col].includes(row)) return cell('gray') + cell('gray');
  const side = col === 'Y' ? ' line-bottom' : '';
  return cell(`box ${color}`, entries[col + row]) + cell(color + side);
}

function buildRow(i) {
  const l = i + 9;
  const r = i + 38;
  let html = cell('edge');

  if (i < 21) {
    html += cell('num', l) + cell('word', leftWords[i]);
    html += cell('box purple', entries['D' + l]) + cell('purple', entries['E' + l]);
    html += pair('H', l, 'purple') + pair('U', l, 'mint') + pair('Y', l, 'mint') + pair('AJ', l, 'blue');
  } else if (i === 21) {
    html += cell('') + cell('');
    html += cell('box total', 6, 'colspan="4"') + cell('box total', 1, 'colspan="4"') + cell('box total', 2, 'colspan="2"');
  } else {
    html += cell('', '', 'colspan="12"');
  }

  html += cell('num', r) + cell('word', rightWords[i]);
  html += cell('box purple') + cell('purple');
  html += pair('AX', r, 'purple') + pair('BI', r, 'mint') + pair('BM', r, 'mint') + pair('BQ', r, 'mint');
  html += cell('gray') + cell('gray') + pair('CI', r, 'blue') + cell('');

  if (kinds[i]) html += cell('box kind', kinds[i][0], `rowspan="${kinds[i][1]}"`);
  const shade = sounds[i][2] ? ' shade' : '';
  const tied = sounds[i][1].length > 1 ? ' tied' : '';
  html += cell('box sound' + shade, sounds[i][0]) + cell('box sound' + shade + tied, sounds[i][1]);
  html += cell('') + cell('') + cell('') + cell('');

  return `<tr style="height:${heights[i]}px">${html}</tr>`;
}

function buildGrid() {
  const cols = columns.map(([, w]) => w ? `<col style="width:${w}px">` : '<col>').join('');
  const heads = columns.map(([name]) => `<th${name === 'E' ? ' class="picked"' : ''}>${name}</th>`).join('');
  const rows = heights.map((h, i) => buildRow(i)).join('');
  document.getElementById('grid').innerHTML =
    `<colgroup>${cols}</colgroup><thead><tr>${heads}</tr></thead><tbody>${rows}</tbody>`;
}

buildGrid();
document.getElementById('scroller').scrollTop = 14;
document.getElementById('sideScroller').scrollTop = 19;
```
